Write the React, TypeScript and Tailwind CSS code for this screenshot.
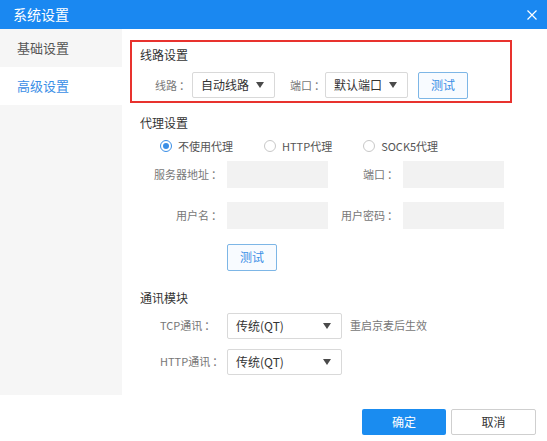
import React, { useState } from 'react'

const font = { fontFamily: '"Noto Sans CJK SC", "Noto Sans", sans-serif' }

function Arrow() {
  return (
    <svg width="8" height="6" viewBox="0 0 8 6" className="shrink-0">
      <path d="M0 0h8L4 6z" fill="#4a4a4a" />
    </svg>
  )
}

// 标签文字 + 冒号（冒号与文字之间留点空隙）
function Label({ text, className }: { text: string; className: string }) {
  return (
    <span className={`${className} text-[11px] text-[#777] whitespace-nowrap`}>
      {text}
      <span className="ml-[2px]">：</span>
    </span>
  )
}

function Select({ value, width }: { value: string; width: string }) {
  return (
    <div
      className={`${width} h-[26px] flex items-center justify-between pl-[8px] pr-[10px] border border-[#d9d9d9] rounded-[2px] bg-white text-[12px] text-[#333]`}
    >
      <span>{value}</span>
      <Arrow />
    </div>
  )
}

function TestButton() {
  return (
    <button className="w-[50px] h-[27px] border border-[#7db6e6] rounded-[2px] bg-[#f8fbff] text-[12px] text-[#3a8ee6]">
      测试
    </button>
  )
}

function Radio({ label, checked }: { label: string; checked?: boolean }) {
  return (
    <label className="flex items-center gap-[6px] text-[11px] text-[#555]">
      <span
        className={`w-[12px] h-[12px] rounded-full border flex items-center justify-center ${
          checked ? 'border-[#3a8ee6]' : 'border-[#c8c8c8]'
        }`}
      >
        {checked && <span className="w-[6px] h-[6px] rounded-full bg-[#3a8ee6]" />}
      </span>
      {label}
    </label>
  )
}

function Field({ label, labelWidth }: { label: string; labelWidth: string }) {
  return (
    <div className="flex items-center">
      <Label text={label} className={`${labelWidth} text-right`} />
      <div className="ml-[5px] w-[101px] h-[27px] bg-[#f2f2f2]" />
    </div>
  )
}

export default function App() {
  const [tab, setTab] = useState(1)
  const tabs = ['基础设置', '高级设置']

  return (
    <div className="w-[547px] h-[441px] bg-white flex flex-col" style={font}>
      {/* 标题栏 */}
      <div className="h-[29px] bg-[#1a88f1] flex items-center justify-between pl-[13px] pr-[10px]">
        <span className="text-[14px] text-white">系统设置</span>
        <svg width="10" height="10" viewBox="0 0 10 10">
          <path d="M0.5 0.5l9 9M9.5 0.5l-9 9" stroke="#fff" strokeWidth="1.2" />
        </svg>
      </div>

      <div className="h-[366px] flex">
        {/* 左侧菜单 */}
        <div className="w-[122px] bg-[#f6f6f6] flex flex-col">
          {tabs.map((t, i) => (
            <div
              key={t}
              onClick={() => setTab(i)}
              className={`h-[38px] flex items-center pl-[17px] text-[13px] ${
                tab === i ? 'bg-white text-[#3a8ee6]' : 'text-[#555]'
              }`}
            >
              {t}
            </div>
          ))}
        </div>

        {/* 内容 */}
        <div className="flex-1 flex flex-col">
          <div className="ml-[8px] mt-[11px] w-[382px] h-[63px] border-2 border-[#e8322e] flex flex-col">
            <div className="mt-[4px] h-[18px] leading-[18px] pl-[8px] text-[12px] text-[#333]">线路设置</div>
            <div className="mt-[7px] flex items-center">
              <Label text="线路" className="w-[58px] text-right" />
              <div className="ml-[2px]">
                <Select value="自动线路" width="w-[83px]" />
              </div>
              <Label text="端口" className="w-[50px] text-right" />
              <Select value="默认端口" width="w-[83px]" />
              <div className="ml-[10px]">
                <TestButton />
              </div>
            </div>
          </div>

          <div className="mt-[11px] h-[18px] leading-[18px] pl-[18px] text-[12px] text-[#333]">代理设置</div>
          <div className="mt-[5px] h-[18px] pl-[38px] flex items-center gap-[31px]">
            <Radio label="不使用代理" checked />
            <Radio label="HTTP代理" />
            <Radio label="SOCK5代理" />
          </div>

          <div className="mt-[6px] flex">
            <Field label="服务器地址" labelWidth="w-[100px]" />
            <Field label="端口" labelWidth="w-[70px]" />
          </div>
          <div className="mt-[14px] flex">
            <Field label="用户名" labelWidth="w-[100px]" />
            <Field label="用户密码" labelWidth="w-[70px]" />
          </div>
          <div className="mt-[14px] pl-[105px]">
            <TestButton />
          </div>

          <div className="mt-[18px] h-[18px] leading-[18px] pl-[18px] text-[12px] text-[#333]">通讯模块</div>
          <div className="mt-[6px] pl-[38px] flex items-center">
            <Label text="TCP通讯" className="w-[67px]" />
            <Select value="传统(QT)" width="w-[115px]" />
            <span className="ml-[8px] text-[11px] text-[#777]">重启京麦后生效</span>
          </div>
          <div className="mt-[10px] pl-[38px] flex items-center">
            <Label text="HTTP通讯" className="w-[67px]" />
            <Select value="传统(QT)" width="w-[115px]" />
          </div>
        </div>
      </div>

      {/* 底部按钮 */}
      <div className="flex-1 flex justify-end items-start pt-[14px] pr-[11px] gap-[5px]">
        <button className="w-[84px] h-[26px] rounded-[2px] bg-[#1a8cf0] text-[12px] text-white">确定</button>
        <button className="w-[85px] h-[26px] rounded-[2px] border border-[#cfcfcf] bg-white text-[12px] text-[#333]">
          取消
        </button>
      </div>
    </div>
  )
}
